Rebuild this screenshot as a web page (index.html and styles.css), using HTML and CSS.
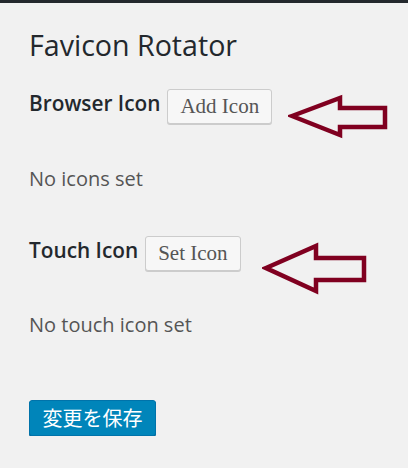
FILE: index.html
```html
<!DOCTYPE html>
<html lang="ja">
<head>
  <meta charset="UTF-8" />
  <title>Favicon Rotator</title>
  <link rel="stylesheet" href="styles.css">
</head>
<body>
<div class="topbar"></div>

<div class="wrap">
  <h1>Favicon Rotator</h1>

  <div class="field field-browser">
    <h3>Browser Icon</h3>
    <button class="button">Add Icon</button>
    <svg class="arrow arrow-browser" width="102" height="46" viewBox="0 0 102 46">
      <path d="M4 22 L52 4 L52 14 L97 14 L97 33 L52 33 L52 41 Z" />
    </svg>
  </div>
  <p class="note note-browser">No icons set</p>

  <div class="field field-touch">
    <h3>Touch Icon</h3>
    <button class="button">Set Icon</button>
    <svg class="arrow arrow-touch" width="107" height="54" viewBox="0 0 107 54">
      <path d="M4 26 L54 4 L54 16 L102 16 L102 38 L54 38 L54 49 Z" />
    </svg>
  </div>
  <p class="note note-touch">No touch icon set</p>

  <button class="button-primary">変更を保存</button>
</div>
</body>
</html>
```

FILE: styles.css
```css
body {
  margin: 0;
  background: #f1f1f1;
  font-family: "Open Sans", sans-serif;
  color: #23282d;
}
.topbar {
  height: 3px;
  background: #23282d;
}
.wrap {
  padding: 22px 0 0 29px;
}
h1 {
  margin: 0;
  font-size: 28.6px;
  font-weight: 400;
  line-height: 40px;
}
.field {
  display: flex;
  align-items: flex-start;
}
.field-browser {
  margin-top: 24px;
}
.field-touch {
  margin-top: 44px;
}
.field h3 {
  margin: 1px 7px 0 0;
  font-size: 20.8px;
  font-weight: 600;
  line-height: 26px;
}
.button {
  height: 35px;
  padding: 0 12px;
  border: 1px solid #ccc;
  border-radius: 3px;
  background: #f7f7f7;
  box-shadow: 0 1px 0 #ccc;
  color: #555;
  font-family: "Liberation Serif", serif;
  font-size: 21px;
  line-height: 33px;
}
.arrow {
  flex: none;
}
.arrow path {
  fill: none;
  stroke: #800020;
  stroke-width: 4.5;
  stroke-linejoin: miter;
}
.arrow-browser {
  margin: 5px 0 0 16px;
}
.arrow-touch {
  margin: 6px 0 0 21px;
}
.note {
  margin: 0;
  font-size: 20px;
  line-height: 26px;
  color: #555;
}
.note-browser {
  margin-top: 26px;
}
.note-touch {
  margin-top: 16px;
}
.button-primary {
  margin-top: 62px;
  width: 127px;
  height: 36px;
  padding: 0;
  border: 1px solid #0073aa;
  border-radius: 3px;
  background: #0085ba;
  box-shadow: 0 1px 0 #006799;
  color: #fff;
  font-family: "Noto Sans CJK JP", sans-serif;
  font-size: 20px;
  line-height: 34px;
}
```
